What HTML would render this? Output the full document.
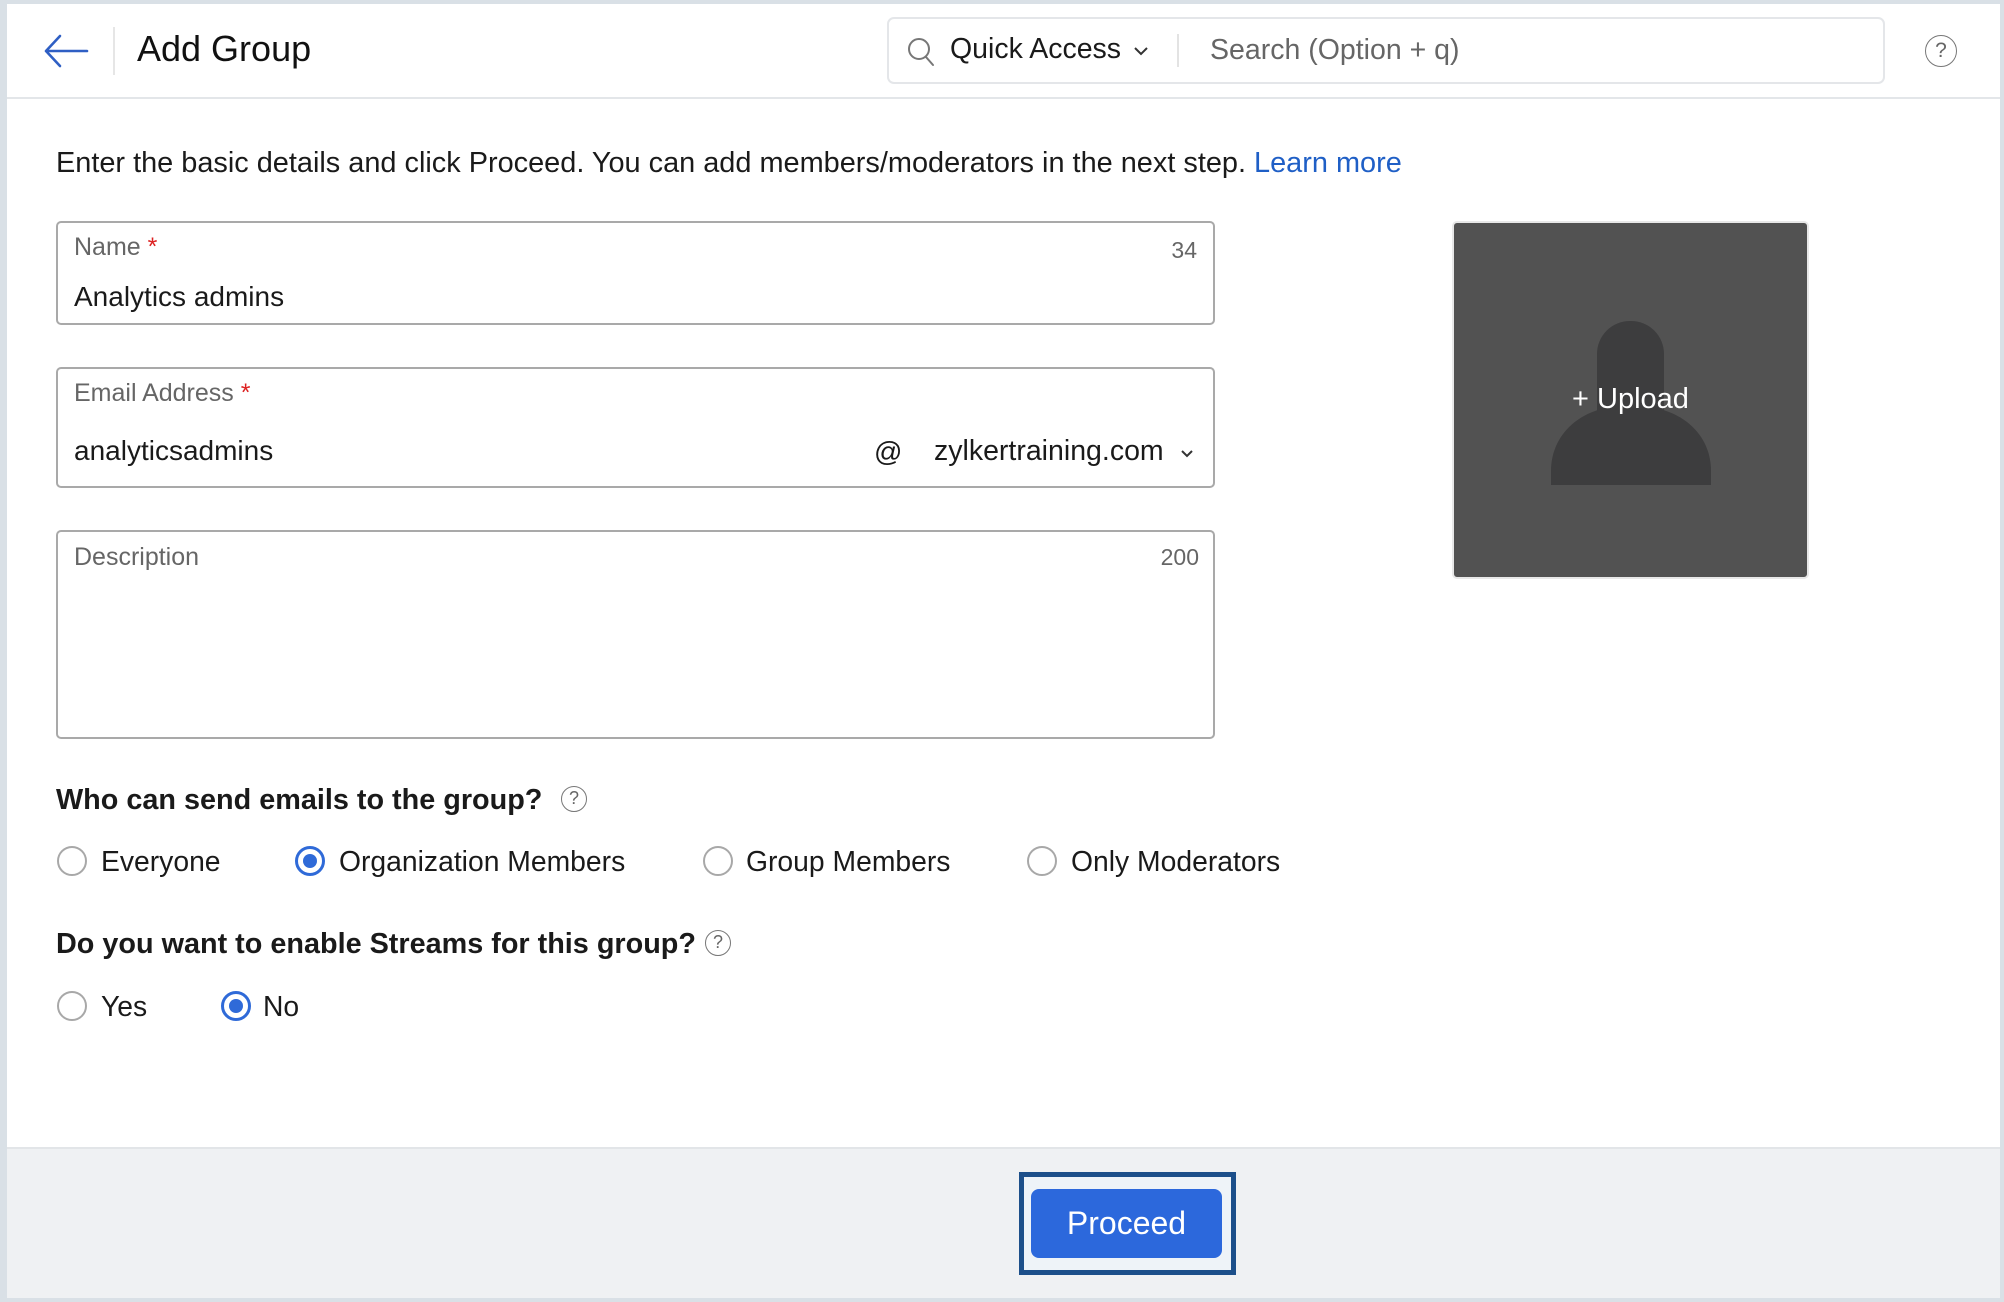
<!DOCTYPE html>
<html><head><meta charset="utf-8"><style>
*{margin:0;padding:0;box-sizing:border-box}
body{width:2004px;height:1302px;background:#d9e0e6;font-family:"Liberation Sans",Arial,sans-serif;position:relative;overflow:hidden;color:#1a1a1a}
.a{position:absolute;white-space:nowrap}
.page{position:absolute;left:7px;top:4px;width:1993px;height:1294px;background:#fff}
.fld{position:absolute;left:56px;width:1159px;border:2px solid #a9a9a9;border-radius:5px;background:#fff}
.lbl{color:#666;font-size:25px}
.val{font-size:28px;color:#1a1a1a}
.r{position:absolute;width:30px;height:30px;border-radius:50%;border:2px solid #a8a8a8;background:#fff}
.r.on{border:3px solid #2f6ad8}
.r.on::after{content:"";position:absolute;left:5px;top:5px;width:14px;height:14px;border-radius:50%;background:#2f6ad8}
.rt{font-size:28.3px;color:#1a1a1a}
.q{font-size:28.8px;font-weight:bold;color:#1a1a1a}
.help{position:absolute;width:26px;height:26px;border:1.5px solid #777;border-radius:50%;color:#666;font-size:18px;text-align:center;line-height:23px}
</style></head><body>
<div class="page"></div>
<div class="a" style="left:7px;top:97px;width:1993px;height:2px;background:#e3e6e9"></div>
<svg class="a" style="left:43px;top:33px" width="46" height="36" viewBox="0 0 46 36"><path d="M44 18H3M17 3L3 18L17 33" fill="none" stroke="#2f5fc4" stroke-width="2.6" stroke-linecap="round" stroke-linejoin="round"/></svg>
<div class="a" style="left:113px;top:27px;width:2px;height:48px;background:#e6e6e6"></div>
<div class="a" style="left:137px;top:28px;font-size:36px;color:#111">Add Group</div>
<div class="a" style="left:887px;top:17px;width:998px;height:67px;border:2px solid #e4e6e9;border-radius:7px"></div>
<svg class="a" style="left:906px;top:36px" width="30" height="32" viewBox="0 0 30 32"><circle cx="13" cy="13" r="10" fill="none" stroke="#777" stroke-width="2"/><path d="M20 21L27 29" stroke="#777" stroke-width="2" stroke-linecap="round"/></svg>
<div class="a" style="left:950px;top:33px;font-size:28.5px;color:#1a1a1a">Quick Access</div>
<svg class="a" style="left:1133px;top:45px" width="16" height="12" viewBox="0 0 16 12"><path d="M2 3L8 9L14 3" fill="none" stroke="#333" stroke-width="2"/></svg>
<div class="a" style="left:1177px;top:34px;width:2px;height:33px;background:#e3e3e3"></div>
<div class="a" style="left:1210px;top:34px;font-size:28.5px;color:#666">Search (Option + q)</div>
<div class="help" style="left:1925px;top:35px;width:32px;height:32px;font-size:21px;line-height:29px">?</div>
<div class="a" style="left:56px;top:147px;font-size:28.9px;color:#1a1a1a">Enter the basic details and click Proceed. You can add members/moderators in the next step. <span style="color:#1f5fc6">Learn more</span></div>
<div class="fld" style="top:221px;height:104px"></div>
<div class="a lbl" style="left:74px;top:233px">Name <span style="color:#d22">*</span></div>
<div class="a lbl" style="right:807px;top:237px;font-size:23px">34</div>
<div class="a val" style="left:74px;top:281px">Analytics admins</div>
<div class="fld" style="top:367px;height:121px"></div>
<div class="a lbl" style="left:74px;top:379px">Email Address <span style="color:#d22">*</span></div>
<div class="a val" style="left:74px;top:435px">analyticsadmins</div>
<div class="a val" style="left:874px;top:436px">@</div>
<div class="a val" style="left:934px;top:435px;font-size:28.5px">zylkertraining.com</div>
<svg class="a" style="left:1179px;top:448px" width="16" height="12" viewBox="0 0 16 12"><path d="M3 3L8 8L13 3" fill="none" stroke="#333" stroke-width="2"/></svg>
<div class="fld" style="top:530px;height:209px"></div>
<div class="a lbl" style="left:74px;top:543px">Description</div>
<div class="a lbl" style="right:805px;top:544px;font-size:23px">200</div>
<div class="a" style="left:1452px;top:221px;width:357px;height:358px;background:#525252;border-radius:5px;border:2px solid #e8e8e8;overflow:hidden">
<svg style="position:absolute;left:0;top:0" width="357" height="358" viewBox="0 0 357 358"><rect x="143" y="98" width="67" height="160" rx="33" fill="#3d3d3e"/><path d="M97 262V248C97 214 122 192 148 186H205C232 192 257 214 257 248V262Z" fill="#3d3d3e"/></svg>
<div class="a" style="left:0;width:353px;top:160px;text-align:center;color:#fff;font-size:29px">+ Upload</div>
</div>
<div class="a q" style="left:56px;top:784px">Who can send emails to the group?</div>
<div class="help" style="left:561px;top:786px">?</div>
<div class="r" style="left:57px;top:846px"></div><div class="a rt" style="left:101px;top:845px">Everyone</div>
<div class="r on" style="left:295px;top:846px"></div><div class="a rt" style="left:339px;top:845px">Organization Members</div>
<div class="r" style="left:703px;top:846px"></div><div class="a rt" style="left:746px;top:845px">Group Members</div>
<div class="r" style="left:1027px;top:846px"></div><div class="a rt" style="left:1071px;top:845px">Only Moderators</div>
<div class="a q" style="left:56px;top:928px">Do you want to enable Streams for this group?</div>
<div class="help" style="left:705px;top:930px">?</div>
<div class="r" style="left:57px;top:991px"></div><div class="a rt" style="left:101px;top:990px">Yes</div>
<div class="r on" style="left:221px;top:991px"></div><div class="a rt" style="left:263px;top:990px">No</div>
<div class="a" style="left:7px;top:1147px;width:1993px;height:151px;background:#eff1f3;border-top:2px solid #e2e5e8"></div>
<div class="a" style="left:1019px;top:1172px;width:217px;height:103px;border:5px solid #1c4f8a;background:#eef3f8"></div>
<div class="a" style="left:1031px;top:1189px;width:191px;height:69px;background:#2c68dc;border-radius:8px;color:#fff;font-size:32px;text-align:center;line-height:69px">Proceed</div>
</body></html>
